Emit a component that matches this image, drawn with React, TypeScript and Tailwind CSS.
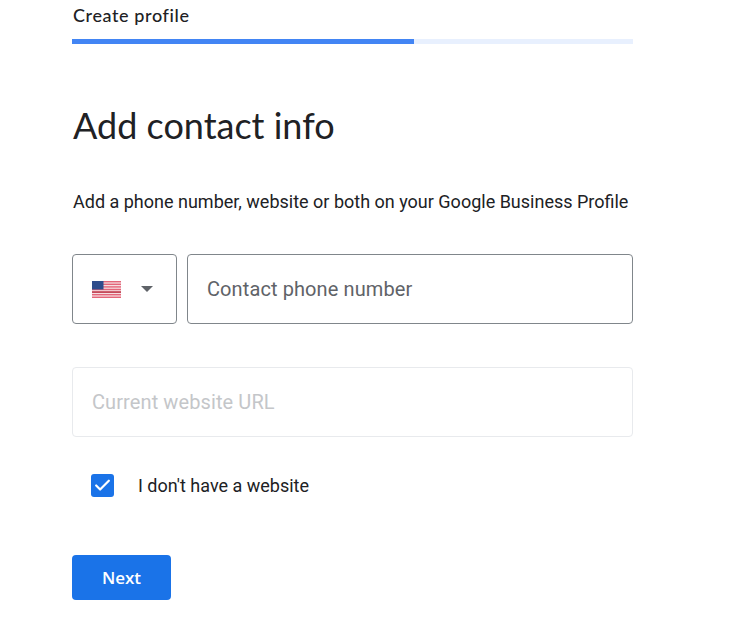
import React from "react";
import { Check } from "lucide-react";

const FlagUS = () => (
  <svg width="29" height="17" viewBox="0 0 29 17" aria-hidden="true">
    <rect width="29" height="17" fill="#f6dfe2" />
    {[0, 2.6, 5.2, 7.8, 10.4, 13, 15.6].map((y) => (
      <rect key={y} x="0" y={y} width="29" height="1.4" fill="#e4667a" />
    ))}
    <rect y="10.4" width="29" height="1.4" fill="#b8404f" />
    <rect width="11.5" height="8.5" fill="#2f4d8c" />
  </svg>
);

const App = () => {
  return (
    <div className="min-h-[627px] bg-white pl-[72px] font-['Roboto',sans-serif] text-[#202124]">
      <div className="w-[561px]">
        {/* Step header */}
        <div className="h-[39px] pt-[3px] pl-px font-['Lato',sans-serif] text-[18px] leading-[24px] font-medium tracking-[0.6px]">
          Create profile
        </div>
        <div className="h-[5px] bg-[#e8f0fe]">
          <div className="h-full w-[342px] bg-[#4285f4]"></div>
        </div>

        <h1 className="mt-[57px] pl-px font-['Lato',sans-serif] text-[36px] leading-[48px] font-normal">
          Add contact info
        </h1>

        <p className="mt-[41px] pl-px text-[18px] leading-[24px]">
          Add a phone number, website or both on your Google Business Profile
        </p>

        {/* Phone */}
        <div className="mt-[40px] flex gap-[10px]">
          <button
            type="button"
            className="flex h-[70px] w-[105px] items-center rounded border border-[#80868b] pl-[19px]"
          >
            <FlagUS />
            <span className="ml-[20px] h-0 w-0 border-x-[6px] border-t-[6px] border-x-transparent border-t-[#5f6368]"></span>
          </button>
          <div className="flex h-[70px] flex-1 items-center rounded border border-[#80868b] px-[19px] text-[20px] tracking-[0.1px] text-[#5f6368]">
            Contact phone number
          </div>
        </div>

        {/* Website */}
        <div className="mt-[43px] flex h-[70px] items-center rounded border border-[#e8eaed] px-[19px] text-[20px] tracking-[0.1px] text-[#c4c6c9]">
          Current website URL
        </div>

        <label className="mt-[37px] flex items-start pl-[19px]">
          <span className="flex h-[23px] w-[23px] items-center justify-center rounded-[3px] bg-[#1a73e8]">
            <Check size={19} strokeWidth={2.8} className="text-white" />
          </span>
          <span className="ml-[24px] text-[18px] leading-[24px]">
            I don't have a website
          </span>
        </label>

        <button
          type="button"
          className="mt-[57px] h-[45px] w-[99px] rounded bg-[#1a73e8] font-['Open_Sans',sans-serif] text-[17px] font-semibold text-white"
        >
          Next
        </button>
      </div>
    </div>
  );
};

export default App;
